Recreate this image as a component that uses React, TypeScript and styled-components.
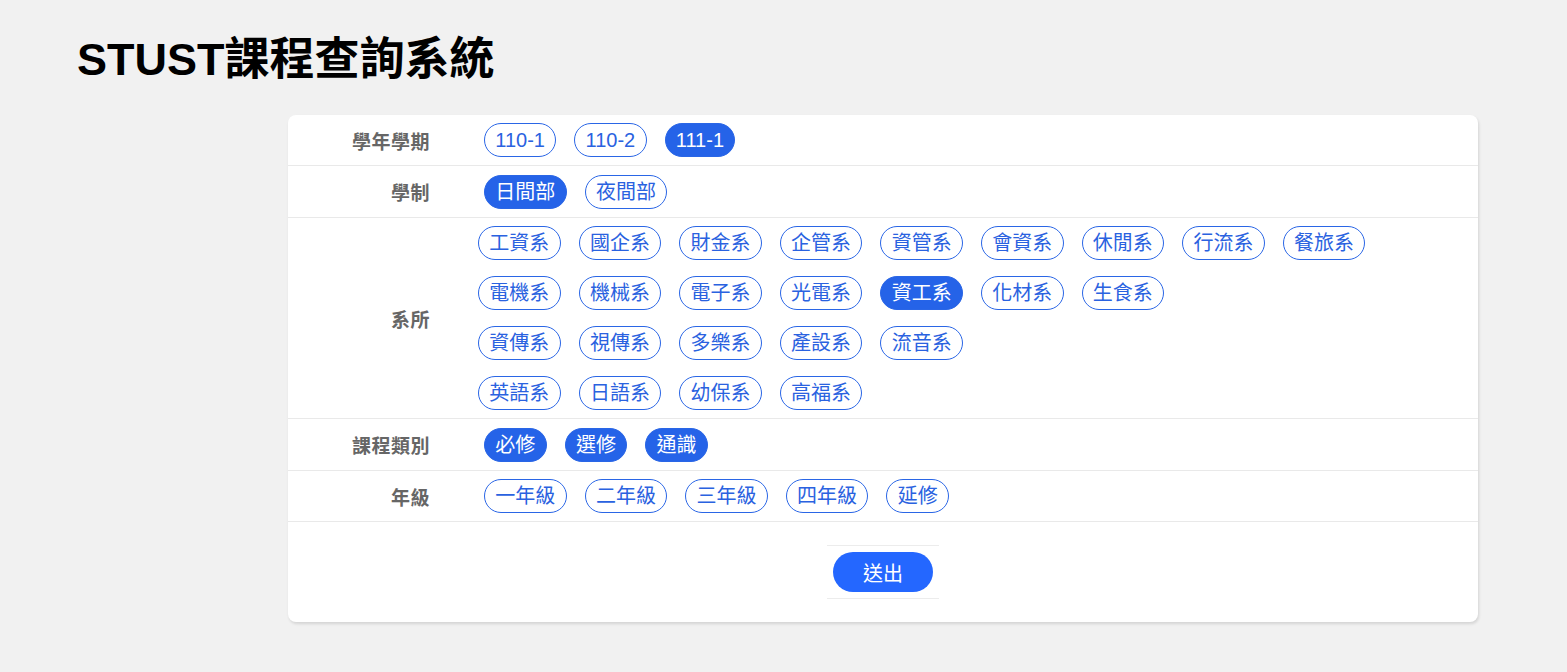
import React from "react";
import styled, { createGlobalStyle } from "styled-components";

const GlobalStyle = createGlobalStyle`
  html, body {
    margin: 0;
    padding: 0;
    background: #f1f1f1;
    font-family: "Liberation Sans", "Noto Sans CJK TC", sans-serif;
  }
`;

const Page = styled.div`
  min-height: 672px;
`;

const Title = styled.h1`
  margin: 0;
  padding: 37px 0 0 77px;
  font-size: 45px;
  line-height: 45px;
  font-weight: 700;
  color: #000;
`;

const Card = styled.div`
  margin: 33px 0 0 288px;
  width: 1190px;
  background: #fff;
  border-radius: 8px;
  box-shadow: 1px 2px 3px rgba(0, 0, 0, 0.12);
`;

const Row = styled.div`
  display: grid;
  grid-template-columns: 142px 1fr;
  align-items: center;
  border-bottom: 1px solid #e9e9e9;
`;

const Label = styled.div`
  text-align: right;
  font-size: 19px;
  font-weight: 700;
  color: #666;
  letter-spacing: 0.5px;
`;

const Options = styled.div<{ $indent: number; $pad: number }>`
  display: flex;
  flex-direction: column;
  gap: 16px;
  padding: ${(p) => p.$pad}px 0 ${(p) => p.$pad}px ${(p) => p.$indent}px;
`;

const ChipLine = styled.div`
  display: flex;
  gap: 18px;
`;

const Chip = styled.button<{ $on?: boolean }>`
  box-sizing: border-box;
  height: 34px;
  padding: 0 10.3px;
  border-radius: 17px;
  border: 1px solid #2a66e6;
  background: ${(p) => (p.$on ? "#2563e8" : "#fff")};
  color: ${(p) => (p.$on ? "#fff" : "#2a62e0")};
  font-family: "Liberation Sans", "Noto Sans CJK TC", sans-serif;
  font-size: 20px;
  line-height: 32px;
  display: flex;
  align-items: center;
  cursor: pointer;
  white-space: nowrap;
`;

const SubmitRow = styled.div`
  display: flex;
  justify-content: center;
  padding: 23px 0 23px;
`;

const SubmitFrame = styled.div`
  padding: 6px;
  border-top: 1px solid #ececec;
  border-bottom: 1px solid #ececec;
`;

const SubmitButton = styled.button`
  width: 100px;
  height: 40px;
  border: none;
  border-radius: 20px;
  background: #2467ff;
  color: #fff;
  font-family: "Liberation Sans", "Noto Sans CJK TC", sans-serif;
  font-size: 20px;
  cursor: pointer;
  display: block;
`;

type Opt = { label: string; on?: boolean };

const sections: { label: string; indent: number; pad: number; lines: Opt[][] }[] = [
  {
    label: "學年學期",
    indent: 54,
    pad: 8,
    lines: [[{ label: "110-1" }, { label: "110-2" }, { label: "111-1", on: true }]],
  },
  {
    label: "學制",
    indent: 54,
    pad: 8.5,
    lines: [[{ label: "日間部", on: true }, { label: "夜間部" }]],
  },
  {
    label: "系所",
    indent: 48,
    pad: 8,
    lines: [
      ["工資系", "國企系", "財金系", "企管系", "資管系", "會資系", "休閒系", "行流系", "餐旅系"].map((l) => ({ label: l })),
      ["電機系", "機械系", "電子系", "光電系", "資工系", "化材系", "生食系"].map((l) => ({ label: l, on: l === "資工系" })),
      ["資傳系", "視傳系", "多樂系", "產設系", "流音系"].map((l) => ({ label: l })),
      ["英語系", "日語系", "幼保系", "高福系"].map((l) => ({ label: l })),
    ],
  },
  {
    label: "課程類別",
    indent: 54,
    pad: 8.5,
    lines: [["必修", "選修", "通識"].map((l) => ({ label: l, on: true }))],
  },
  {
    label: "年級",
    indent: 54,
    pad: 8,
    lines: [["一年級", "二年級", "三年級", "四年級", "延修"].map((l) => ({ label: l }))],
  },
];

export default function App() {
  return (
    <Page>
      <GlobalStyle />
      <Title>STUST課程查詢系統</Title>
      <Card>
        {sections.map((s) => (
          <Row key={s.label}>
            <Label>{s.label}</Label>
            <Options $indent={s.indent} $pad={s.pad}>
              {s.lines.map((line, i) => (
                <ChipLine key={i}>
                  {line.map((o) => (
                    <Chip key={o.label} $on={o.on}>
                      {o.label}
                    </Chip>
                  ))}
                </ChipLine>
              ))}
            </Options>
          </Row>
        ))}
        <SubmitRow>
          <SubmitFrame>
            <SubmitButton>送出</SubmitButton>
          </SubmitFrame>
        </SubmitRow>
      </Card>
    </Page>
  );
}
